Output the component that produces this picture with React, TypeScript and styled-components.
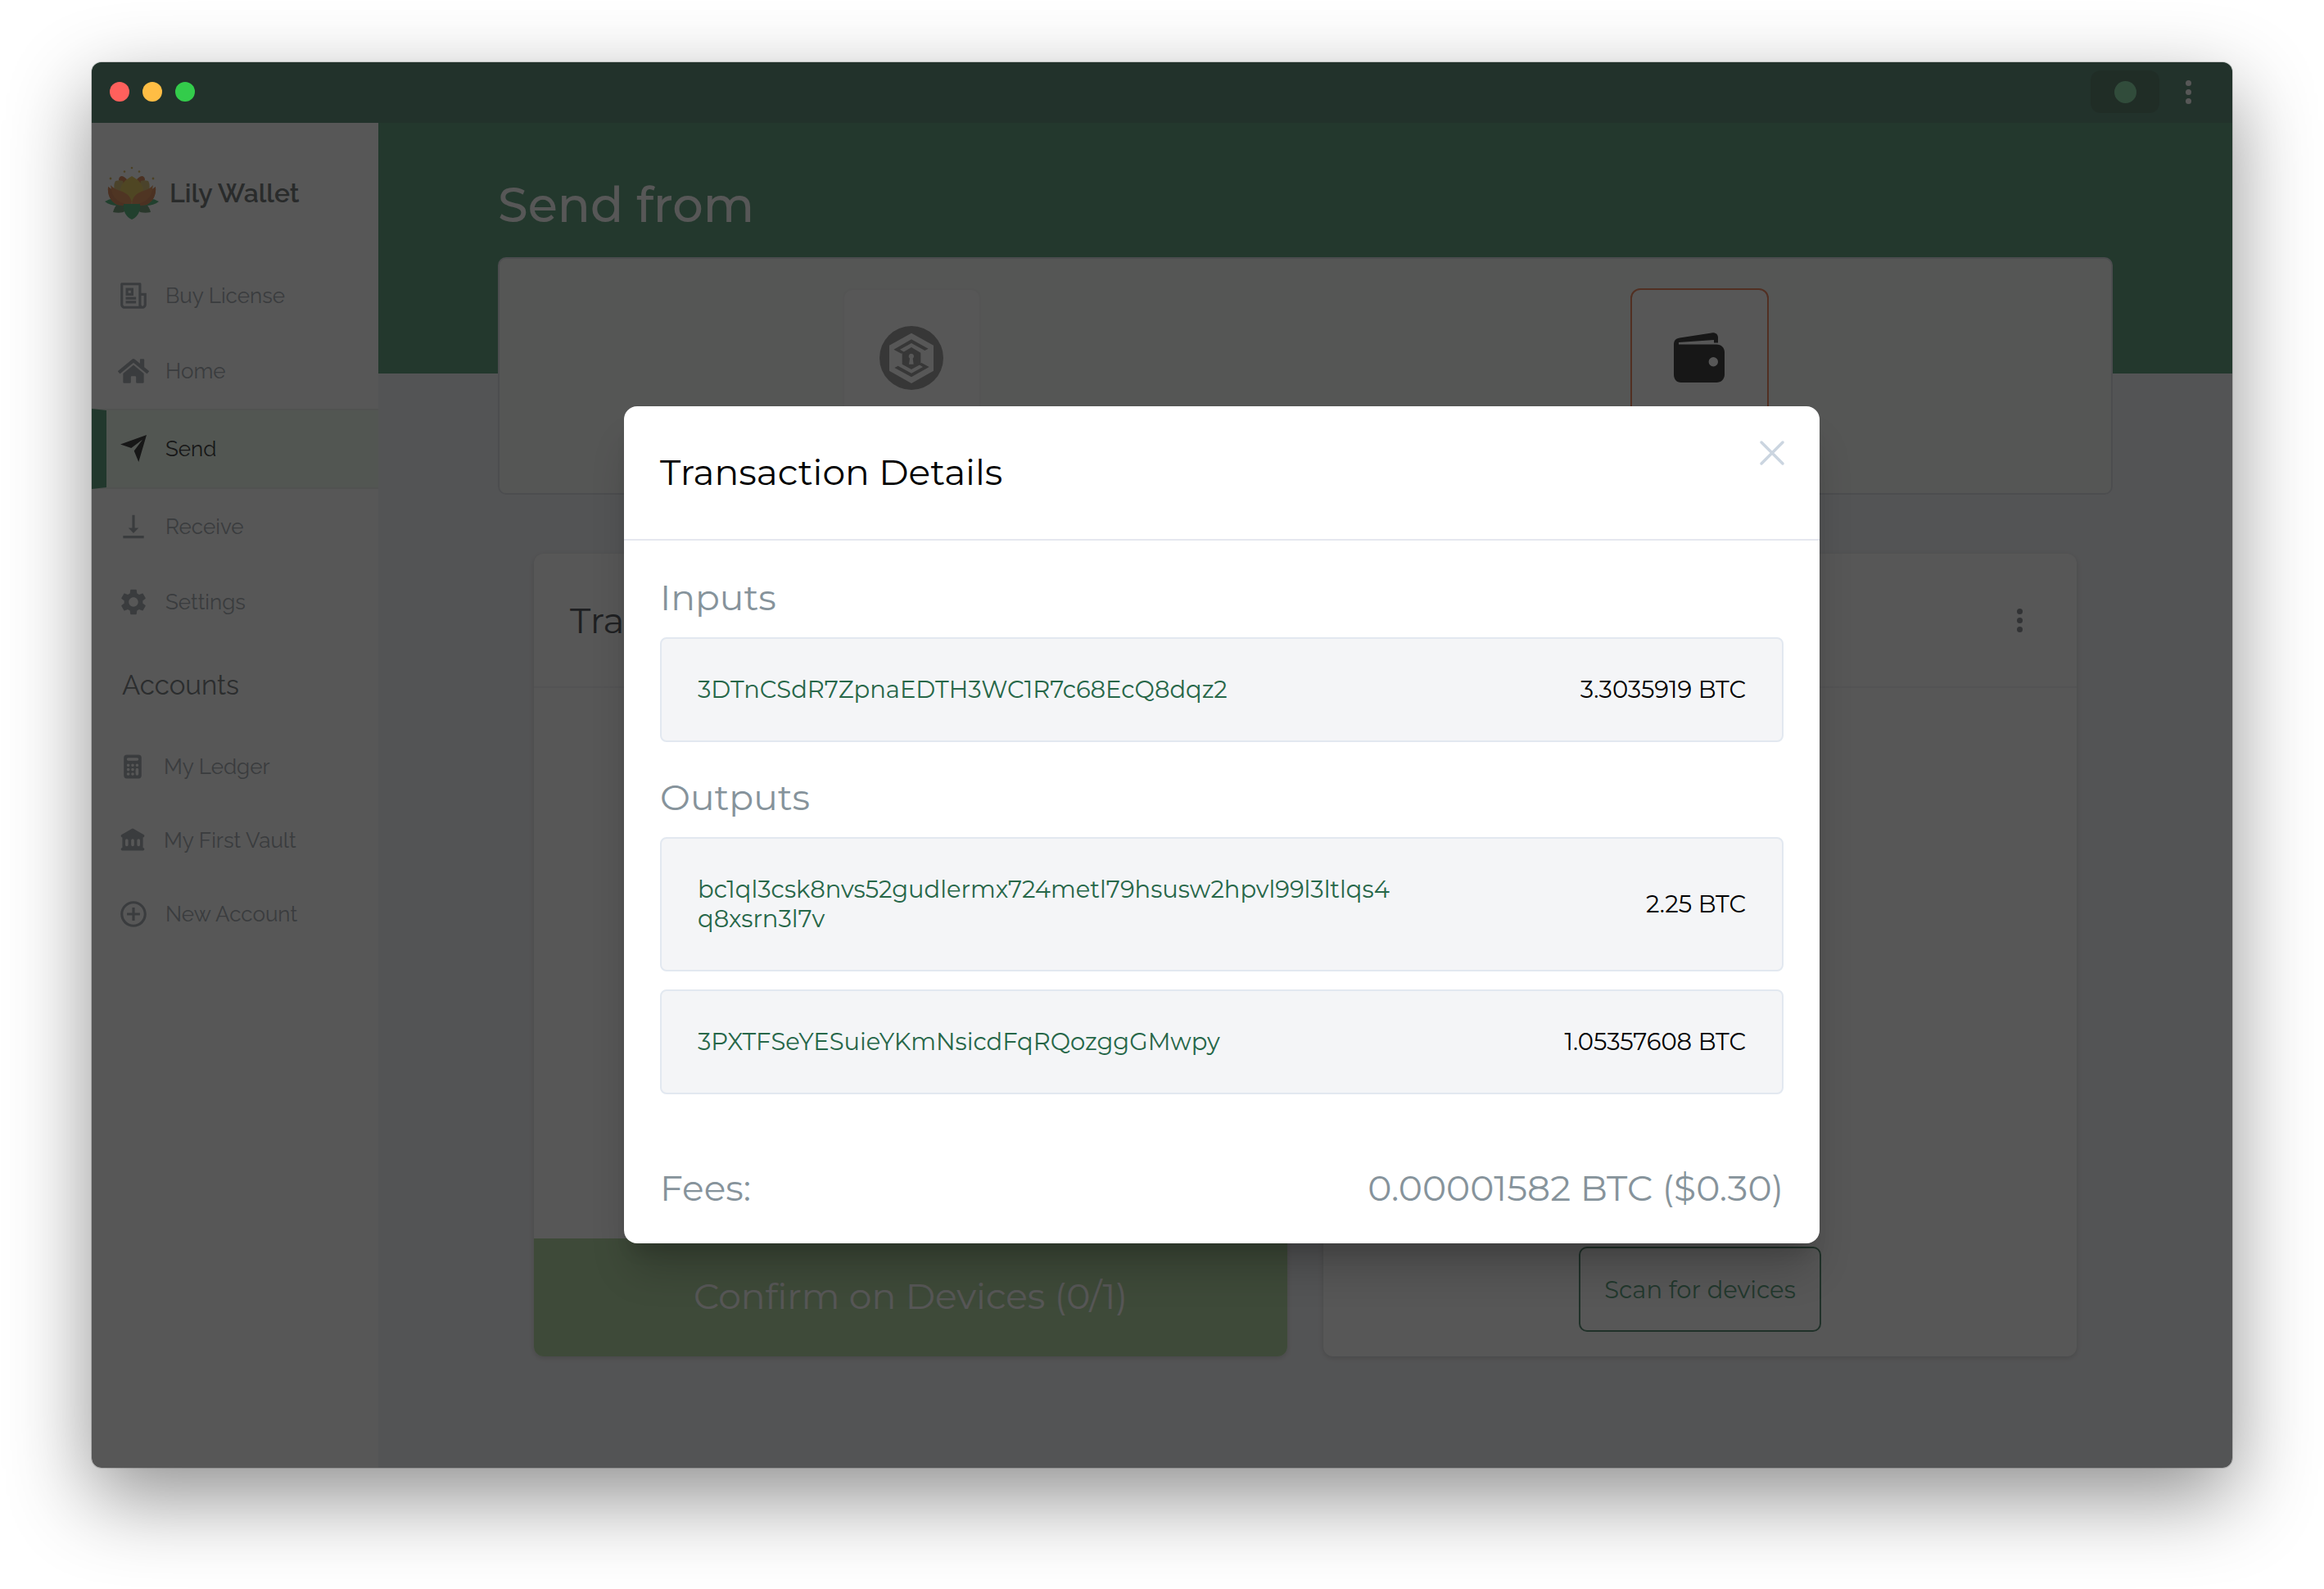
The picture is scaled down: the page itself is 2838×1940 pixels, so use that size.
import React from "react";
import styled, { createGlobalStyle } from "styled-components";
import { RiNewspaperLine } from "react-icons/ri";
import { FaHome } from "react-icons/fa";
import { MdVerticalAlignBottom, MdSettings, MdAddCircleOutline } from "react-icons/md";
import { HiCalculator, HiLibrary } from "react-icons/hi";

const sans = `"Montserrat", Inter, "Open Sans", sans-serif`;
const raleway = `"Raleway", Lato, "Open Sans", sans-serif`;

const GlobalStyle = createGlobalStyle`
  *, *::before, *::after { box-sizing: border-box; }
  body { margin: 0; background: #fff; font-family: ${sans}; }
  h1, h2, h3, p, ul { margin: 0; padding: 0; font-weight: 400; }
  ul { list-style: none; }
  a { text-decoration: none; }
  button { font-family: inherit; cursor: pointer; }
`;

const Desktop = styled.div`
  min-height: 100vh;
  display: flex;
  padding: 76px 112px 148px;
`;

const Window = styled.div`
  position: relative;
  flex: 1;
  display: flex;
  flex-direction: column;
  border-radius: 12px;
  overflow: hidden;
`;

const Shadow = styled.div`
  flex: 1;
  display: flex;
  border-radius: 12px;
  box-shadow: 0 0 0 1px rgba(0, 0, 0, 0.15), 0 36px 100px rgba(0, 0, 0, 0.44);
`;

const TitleBar = styled.header`
  display: flex;
  align-items: center;
  justify-content: space-between;
  height: 74px;
  padding: 0 50px 2px 22px;
  background: #2f6b50;
`;

const Lights = styled.div`
  position: relative;
  z-index: 3;
  display: flex;
  gap: 16px;
`;

const Light = styled.button<{ $color: string }>`
  width: 24px;
  height: 24px;
  padding: 0;
  border: 0;
  border-radius: 50%;
  background: ${(p) => p.$color};
`;

const TitleActions = styled.div`
  display: flex;
  align-items: center;
  gap: 32px;
`;

const StatusBadge = styled.button`
  display: grid;
  place-items: center;
  width: 84px;
  height: 52px;
  padding: 0;
  border: 0;
  border-radius: 12px;
  background: #25573f;
`;

const StatusDot = styled.span`
  width: 27px;
  height: 27px;
  border-radius: 50%;
  background: #68d391;
`;

const MenuButton = styled.button<{ $color: string }>`
  display: flex;
  flex-direction: column;
  gap: 4px;
  padding: 0;
  border: 0;
  background: none;
  color: ${(p) => p.$color};
`;

const MenuDot = styled.span`
  width: 7px;
  height: 7px;
  border-radius: 50%;
  background: currentColor;
`;

const Body = styled.div`
  flex: 1;
  display: flex;
`;

const Sidebar = styled.nav`
  flex: 0 0 350px;
  background: #fff;
  font-family: ${raleway};
`;

const Brand = styled.div`
  display: flex;
  align-items: center;
  gap: 13px;
  height: 165px;
  padding: 6px 16px 0;
  color: #4a4f4f;
  font-size: 32px;
  font-weight: 600;
`;

const NavLink = styled.a<{ $active?: boolean }>`
  display: flex;
  align-items: center;
  gap: 20px;
  height: ${(p) => (p.$active ? 98 : 92)}px;
  padding: 0 0 0 ${(p) => (p.$active ? 14 : 32)}px;
  border: solid #e8ece8;
  border-width: ${(p) => (p.$active ? "2px 0" : "0")};
  ${(p) => p.$active && "border-left: 18px solid #2f855a;"}
  background: ${(p) => (p.$active ? "#ebfbec" : "transparent")};
  color: ${(p) => (p.$active ? "#000" : "#8b939b")};
  font-size: 26px;

  svg {
    flex: none;
  }
`;

const AccountLink = styled(NavLink)`
  height: 90px;
`;

const AccountsTitle = styled.h3`
  padding: 34px 37px 32px;
  color: #52585c;
  font-size: 33px;
  line-height: 44px;
`;

const Main = styled.main`
  flex: 1;
  min-width: 0;
  background: linear-gradient(#338558 306px, #f0f2f6 306px);
  padding: 0 146px 136px;
  display: flex;
  flex-direction: column;
`;

const PageTitle = styled.h1`
  padding: 64px 0 28px;
  color: #fff;
  font-size: 59px;
  font-weight: 500;
  line-height: 72px;
`;

const SourceCard = styled.section`
  display: grid;
  grid-template-columns: 1fr 1fr;
  justify-items: center;
  align-items: start;
  height: 290px;
  padding: 36px 22px;
  border: 2px solid #d3d7e0;
  border-radius: 10px;
  background: #f5fbf6;
`;

const SourceOption = styled.button<{ $active?: boolean }>`
  display: flex;
  align-items: flex-start;
  justify-content: center;
  width: 169px;
  height: 213px;
  padding: 44px 0 0;
  border: 2px solid ${(p) => (p.$active ? "#e8602c" : "#f1f4f1")};
  border-radius: 12px;
  background: #fff;
`;

const OptionIcon = styled.span`
  display: grid;
  place-items: center;
  height: 78px;
`;

const Cards = styled.div`
  flex: 1;
  display: grid;
  grid-template-columns: 1fr 1fr;
  gap: 44px;
  padding: 72px 44px 0;
`;

const Card = styled.section`
  display: flex;
  flex-direction: column;
  border-radius: 12px;
  overflow: hidden;
  background: #fff;
  box-shadow: 0 2px 6px rgba(0, 0, 0, 0.2);
`;

const CardHeader = styled.div`
  display: flex;
  align-items: center;
  justify-content: space-between;
  height: 164px;
  padding: 0 66px 0 44px;
  border-bottom: 2px solid #edeff2;
`;

const CardTitle = styled.h2`
  color: #20262c;
  font-size: 44px;
`;

const ConfirmButton = styled.button`
  height: 144px;
  margin-top: auto;
  padding: 0 0 4px;
  border: 0;
  background: #9bcb87;
  color: #fff;
  font-size: 44px;
  font-weight: 400;
`;

const ScanButton = styled.button`
  align-self: center;
  height: 104px;
  margin: auto 0 30px;
  padding: 0 29px;
  border: 2px solid #276749;
  border-radius: 10px;
  background: #fff;
  color: #2f855a;
  font-size: 29px;
`;

const Overlay = styled.div`
  position: absolute;
  inset: 0;
  z-index: 2;
  display: flex;
  align-items: center;
  justify-content: center;
  padding: 146px 0 0 146px;
  background: rgba(31, 31, 31, 0.75);
`;

const Modal = styled.div`
  width: 1460px;
  max-width: 100%;
  border-radius: 16px;
  background: #fff;
  box-shadow: 0 40px 50px -10px rgba(0, 0, 0, 0.2), 0 20px 20px -10px rgba(0, 0, 0, 0.1);
`;

const ModalHeader = styled.div`
  display: flex;
  align-items: flex-start;
  justify-content: space-between;
  height: 164px;
  padding: 31px 32px 0 44px;
  border-bottom: 2px solid #e5e7ef;
`;

const ModalTitle = styled.h2`
  padding-top: 21px;
  color: #000;
  font-size: 44px;
  line-height: 56px;
`;

const CloseButton = styled.button`
  display: flex;
  padding: 0;
  border: 0;
  background: none;
  color: #cbd5e0;
`;

const ModalBody = styled.div`
  padding: 42px 44px 40px;
`;

const SectionTitle = styled.h3`
  margin-bottom: 22px;
  color: #86939b;
  font-size: 44px;
  line-height: 54px;
`;

const RowList = styled.ul`
  display: flex;
  flex-direction: column;
  gap: 22px;
  margin-bottom: 40px;
`;

const Row = styled.li`
  display: flex;
  align-items: center;
  justify-content: space-between;
  padding: 44px;
  border: 2px solid #e2e8f0;
  border-radius: 8px;
  background: #f4f5f7;
  font-size: 29px;
  line-height: 36px;
`;

const Address = styled.span`
  flex: 0 1 856px;
  color: #276749;
  word-break: break-all;
`;

const Amount = styled.span`
  color: #000;
  white-space: nowrap;
`;

const Fees = styled.div`
  display: flex;
  justify-content: space-between;
  padding-top: 46px;
  color: #86939b;
  font-size: 44px;
  line-height: 56px;
`;

const LotusLogo = () => (
  <svg width="66" height="66" viewBox="0 0 66 66" aria-hidden="true">
    <path fill="#4b8353" d="M10 56c2-7 5-11 11-12l9 3-7 9c-4 1-9 1-13 0zM56 56c-2-7-5-11-11-12l-9 3 7 9c4 1 9 1 13 0z" />
    <path fill="#2aa35e" d="M0 43c5-3 9-4 14-3l10 7c-9 2-18 1-24-4zM66 43c-5-3-9-4-14-3l-10 7c9 2 18 1 24-4z" />
    <path fill="#d06a2c" d="M17 17c0-3 1-4 3-5 3 0 5 2 7 4l-3 8zM49 17c0-3-1-4-3-5-3 0-5 2-7 4l3 8z" />
    <path fill="#cfb052" d="M12 31c-1-6-1-10 1-13 3-1 6-1 9 0l4 20zM54 31c1-6 1-10-1-13-3-1-6-1-9 0l-4 20z" />
    <path fill="#e0bc30" d="M33 12c9 5 14 11 14 18l-6 14H25l-6-14c0-7 5-13 14-18z" />
    <path fill="#df7a30" d="M4 25l4 3-1-5c4 4 8 6 12 7 9 3 14 8 14 17-6 1-13 1-18 0C7 43 3 35 4 25zM62 25l-4 3 1-5c-4 4-8 6-12 7-9 3-14 8-14 17 6 1 13 1 18 0 8-4 12-12 11-22z" />
    <path fill="#cf682e" d="M4 25l4 3c1 10 9 17 22 19-5 1-11 1-15 0C7 43 3 35 4 25zM62 25l-4 3c-1 10-9 17-22 19 5 1 11 1 15 0 8-4 12-12 11-22z" />
    <path fill="#2aa35e" d="M23 46h20c1 9-3 16-10 19-7-3-11-10-10-19z" />
    <g fill="#cfa838">
      <circle cx="33" cy="2" r="1.3" />
      <circle cx="24" cy="6.5" r="1.3" />
      <circle cx="42" cy="6.5" r="1.3" />
      <circle cx="7" cy="15" r="1.4" />
      <circle cx="59" cy="15" r="1.4" />
    </g>
  </svg>
);

const SendIcon = () => (
  <svg width="38" height="38" viewBox="-3 -2 38 38" fill="currentColor" aria-hidden="true">
    <path d="M32 0L0 11.4 13.3 16 27 5.8 16.7 19.6 22.3 33z" />
  </svg>
);

const VaultIcon = () => (
  <svg width="78" height="78" viewBox="18 18 234 234" aria-hidden="true">
    <circle cx="135" cy="135" r="117" fill="#7f7f7f" />
    <path fill="#fff" d="M135 44l81 45v93l-81 46-81-46V89z" />
    <path fill="#7f7f7f" d="M70 104l65-37 62 34-13 7-49-27-42 23 15 9-10 6zM200 168l-65 37-62-34 13-7 49 27 42-23-15-9 10-6zM135 96l34 20v42l-34 19-34-19v-42z" />
    <path fill="#fff" d="M135 119a10 10 0 0 1 5 18l3 21h-17l3-21a10 10 0 0 1 6-18z" />
  </svg>
);

const WalletIcon = () => (
  <svg width="62" height="62" viewBox="0 0 62 62" aria-hidden="true">
    <path
      fill="#000"
      fillRule="evenodd"
      d="M7 6.5L46 .4C51-.4 54 2 54 6v6.5h-5V9L6 12v2.6h46c6 0 10 4 10 9.4v27c0 6-4 10-10 10H9c-6 0-9-4-9-10V15C0 10 2 7.3 7 6.5zM48.3 30a5.7 5.7 0 1 0 0 11.4 5.7 5.7 0 0 0 0-11.4z"
    />
  </svg>
);

const CloseIcon = () => (
  <svg width="52" height="52" viewBox="0 0 24 24" fill="none" stroke="currentColor" strokeWidth="1.6" strokeLinecap="round" aria-hidden="true">
    <path d="M6 18L18 6M6 6l12 12" />
  </svg>
);

const Dots = ({ color, label }: { color: string; label: string }) => (
  <MenuButton $color={color} aria-label={label}>
    <MenuDot />
    <MenuDot />
    <MenuDot />
  </MenuButton>
);

type Transfer = { address: string; amount: string };

const inputs: Transfer[] = [{ address: "3DTnCSdR7ZpnaEDTH3WC1R7c68EcQ8dqz2", amount: "3.3035919 BTC" }];
const outputs: Transfer[] = [
  { address: "bc1ql3csk8nvs52gudlermx724metl79hsusw2hpvl99l3ltlqs4q8xsrn3l7v", amount: "2.25 BTC" },
  { address: "3PXTFSeYESuieYKmNsicdFqRQozggGMwpy", amount: "1.05357608 BTC" },
];

const Transfers = ({ items }: { items: Transfer[] }) => (
  <RowList>
    {items.map((item) => (
      <Row key={item.address}>
        <Address>{item.address}</Address>
        <Amount>{item.amount}</Amount>
      </Row>
    ))}
  </RowList>
);

export default function App() {
  return (
    <>
      <GlobalStyle />
      <Desktop>
        <Shadow>
          <Window>
            <TitleBar>
              <Lights>
                <Light $color="#ff605c" aria-label="Close window" />
                <Light $color="#ffbd44" aria-label="Minimize window" />
                <Light $color="#33cc4b" aria-label="Zoom window" />
              </Lights>
              <TitleActions>
                <StatusBadge aria-label="Connection status">
                  <StatusDot />
                </StatusBadge>
                <Dots color="#fff" label="Menu" />
              </TitleActions>
            </TitleBar>
            <Body>
              <Sidebar>
                <Brand>
                  <LotusLogo />
                  <span>Lily Wallet</span>
                </Brand>
                <NavLink href="#license"><RiNewspaperLine size={38} />Buy License</NavLink>
                <NavLink href="#home"><FaHome size={38} />Home</NavLink>
                <NavLink href="#send" $active><SendIcon />Send</NavLink>
                <NavLink href="#receive"><MdVerticalAlignBottom size={38} />Receive</NavLink>
                <NavLink href="#settings"><MdSettings size={38} />Settings</NavLink>
                <AccountsTitle>Accounts</AccountsTitle>
                <AccountLink href="#ledger"><HiCalculator size={36} />My Ledger</AccountLink>
                <AccountLink href="#vault"><HiLibrary size={36} />My First Vault</AccountLink>
                <AccountLink href="#new"><MdAddCircleOutline size={38} />New Account</AccountLink>
              </Sidebar>
              <Main>
                <PageTitle>Send from</PageTitle>
                <SourceCard>
                  <SourceOption aria-label="My First Vault">
                    <OptionIcon><VaultIcon /></OptionIcon>
                  </SourceOption>
                  <SourceOption aria-label="My Ledger" $active>
                    <OptionIcon><WalletIcon /></OptionIcon>
                  </SourceOption>
                </SourceCard>
                <Cards>
                  <Card>
                    <CardHeader>
                      <CardTitle>Tra</CardTitle>
                    </CardHeader>
                    <ConfirmButton>Confirm on Devices (0/1)</ConfirmButton>
                  </Card>
                  <Card>
                    <CardHeader>
                      <span />
                      <Dots color="#6b7278" label="Options" />
                    </CardHeader>
                    <ScanButton>Scan for devices</ScanButton>
                  </Card>
                </Cards>
              </Main>
            </Body>
            <Overlay>
              <Modal role="dialog" aria-modal="true" aria-labelledby="modal-title">
                <ModalHeader>
                  <ModalTitle id="modal-title">Transaction Details</ModalTitle>
                  <CloseButton aria-label="Close"><CloseIcon /></CloseButton>
                </ModalHeader>
                <ModalBody>
                  <SectionTitle>Inputs</SectionTitle>
                  <Transfers items={inputs} />
                  <SectionTitle>Outputs</SectionTitle>
                  <Transfers items={outputs} />
                  <Fees>
                    <span>Fees:</span>
                    <span>0.00001582 BTC ($0.30)</span>
                  </Fees>
                </ModalBody>
              </Modal>
            </Overlay>
          </Window>
        </Shadow>
      </Desktop>
    </>
  );
}
